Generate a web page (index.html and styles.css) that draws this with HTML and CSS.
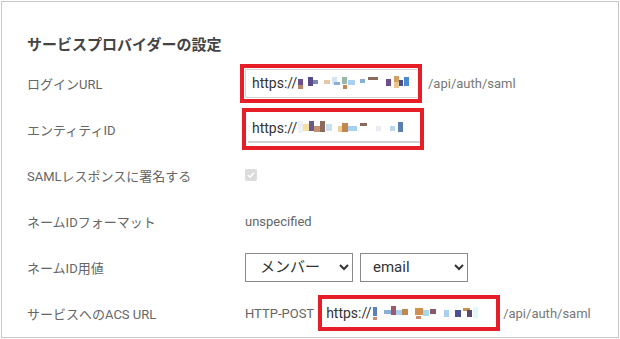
FILE: index.html
```html
<!doctype html>
<html lang="ja">
  <head>
    <meta charset="UTF-8" />
    <title>サービスプロバイダーの設定</title>
    <link rel="stylesheet" href="styles.css">
  </head>
  <body>
    <div class="panel">
      <h2>サービスプロバイダーの設定</h2>

      <div class="form-row">
        <div class="label">ログインURL</div>
        <div class="value">
          <span class="mark">
            <span class="url-field bordered">
              https://
              <svg class="blur" width="116" height="18" viewBox="0 0 116 18">
                <rect x="0" y="5" width="5" height="6" fill="#6b4f8c"/>
                <rect x="0" y="11" width="5" height="4" fill="#b8866a"/>
                <rect x="10" y="3" width="5" height="9" fill="#5a4a8a"/>
                <rect x="15" y="6" width="5" height="4" fill="#7a8ab0"/>
                <rect x="26" y="6" width="6" height="4" fill="#e8c8a8"/>
                <rect x="34" y="3" width="5" height="7" fill="#cfe6f0"/>
                <rect x="36" y="8" width="6" height="3" fill="#8ab0d8"/>
                <rect x="44" y="3" width="5" height="7" fill="#9ab8a8"/>
                <rect x="45" y="11" width="4" height="4" fill="#c08850"/>
                <rect x="50" y="6" width="7" height="5" fill="#a8d0f0"/>
                <rect x="62" y="5" width="5" height="4" fill="#8ab0d8"/>
                <rect x="70" y="3" width="10" height="3" fill="#8a6a5a"/>
                <rect x="88" y="5" width="5" height="7" fill="#6b4f8c"/>
                <rect x="96" y="2" width="5" height="6" fill="#d0a060"/>
                <rect x="96" y="8" width="5" height="6" fill="#e8c890"/>
                <rect x="101" y="6" width="4" height="6" fill="#4a5090"/>
                <rect x="106" y="3" width="5" height="9" fill="#4a8ad0"/>
              </svg>
            </span>
          </span>
          <span class="suffix">/api/auth/saml</span>
        </div>
      </div>

      <div class="form-row">
        <div class="label">エンティティID</div>
        <div class="value">
          <span class="mark mark-wide">
            <span class="url-field underlined">
              https://
              <svg class="blur" width="116" height="18" viewBox="0 0 116 18">
                <rect x="0" y="2" width="5" height="12" fill="#eef0f4"/>
                <rect x="5" y="5" width="6" height="7" fill="#f4e0a0"/>
                <rect x="11" y="2" width="5" height="10" fill="#6a5a8a"/>
                <rect x="16" y="7" width="6" height="6" fill="#c89070"/>
                <rect x="22" y="2" width="5" height="11" fill="#8a6a5a"/>
                <rect x="28" y="5" width="6" height="7" fill="#c8e0f0"/>
                <rect x="40" y="7" width="5" height="6" fill="#f0d090"/>
                <rect x="44" y="4" width="6" height="9" fill="#c08850"/>
                <rect x="50" y="7" width="9" height="5" fill="#a8d0f0"/>
                <rect x="62" y="4" width="7" height="3" fill="#8a6a5a"/>
                <rect x="78" y="7" width="5" height="5" fill="#e8eef4"/>
                <rect x="92" y="7" width="5" height="5" fill="#b8d8e8"/>
                <rect x="100" y="3" width="5" height="10" fill="#5a80b0"/>
              </svg>
            </span>
          </span>
        </div>
      </div>

      <div class="form-row">
        <div class="label">SAMLレスポンスに署名する</div>
        <div class="value">
          <span class="checkbox">
            <svg width="12" height="12" viewBox="0 0 12 12">
              <path d="M3 6.2l2 2 4-4.4" fill="none" stroke="#fff" stroke-width="1.6"/>
            </svg>
          </span>
        </div>
      </div>

      <div class="form-row">
        <div class="label">ネームIDフォーマット</div>
        <div class="value text">unspecified</div>
      </div>

      <div class="form-row">
        <div class="label">ネームID用値</div>
        <div class="value">
          <select class="select select-role">
            <option>メンバー</option>
          </select>
          <select class="select select-attr">
            <option>email</option>
          </select>
        </div>
      </div>

      <div class="form-row">
        <div class="label">サービスへのACS URL</div>
        <div class="value">
          <span class="text method">HTTP-POST</span>
          <span class="mark mark-acs">
            <span class="url-field plain">
              https://
              <svg class="blur" width="116" height="18" viewBox="0 0 116 18">
                <rect x="0" y="3" width="4" height="9" fill="#5a80c0"/>
                <rect x="0" y="13" width="4" height="3" fill="#c89070"/>
                <rect x="11" y="6" width="7" height="4" fill="#8ab0d8"/>
                <rect x="18" y="2" width="5" height="9" fill="#9a5a70"/>
                <rect x="23" y="6" width="6" height="5" fill="#a8d0f0"/>
                <rect x="29" y="5" width="6" height="6" fill="#c08850"/>
                <rect x="42" y="4" width="8" height="7" fill="#d09050"/>
                <rect x="43" y="12" width="5" height="3" fill="#c89070"/>
                <rect x="50" y="6" width="6" height="6" fill="#a8d8f0"/>
                <rect x="57" y="5" width="6" height="5" fill="#8a5a6a"/>
                <rect x="71" y="6" width="5" height="7" fill="#a8d0f0"/>
                <rect x="82" y="6" width="6" height="7" fill="#4a5090"/>
                <rect x="90" y="4" width="7" height="3" fill="#c89050"/>
                <rect x="94" y="6" width="5" height="7" fill="#5a4a70"/>
                <rect x="100" y="3" width="5" height="11" fill="#e0f8f8"/>
              </svg>
            </span>
          </span>
          <span class="suffix suffix-acs">/api/auth/saml</span>
        </div>
      </div>
    </div>
  </body>
</html>
```

FILE: styles.css
```css
body {
  margin: 0;
  padding: 0;
  font-family: Roboto, "Noto Sans CJK JP", sans-serif;
  background: #fff;
}

.panel {
  margin: 1px;
  width: 618px;
  height: 337px;
  box-sizing: border-box;
  border: 1px solid #c8c8c8;
  padding: 33px 0 0 25px;
}

.panel h2 {
  margin: 0 0 5px 0;
  font-size: 15px;
  line-height: 20px;
  font-weight: bold;
  color: #444;
}

.form-row {
  display: flex;
  align-items: center;
  height: 46px;
}

.label {
  width: 218px;
  flex-shrink: 0;
  font-size: 13px;
  color: #666;
}

.value {
  display: flex;
  align-items: center;
}

.text {
  font-size: 13px;
  color: #666;
}

.suffix {
  font-size: 13px;
  color: #777;
  margin-left: 6px;
}

.suffix-acs {
  margin-left: 3px;
}

/* red annotation frame around the blurred url fields */
.mark {
  display: inline-flex;
  border: 4px solid #e61e28;
  padding: 1px;
  margin-left: -5px;
}

.mark-wide {
  margin-left: -3px;
  padding: 2px 0 3px 2px;
}

.mark-acs {
  margin-left: 4px;
  padding: 2px 1px;
}

.url-field {
  display: flex;
  align-items: center;
  width: 172px;
  height: 29px;
  box-sizing: border-box;
  padding-left: 6px;
  font-size: 14px;
  color: #333;
  white-space: nowrap;
  overflow: hidden;
}

.url-field.bordered {
  border: 1px solid #d4d4d4;
  border-right: none;
  border-radius: 2px 0 0 2px;
}

.url-field.underlined {
  border-bottom: 2px solid #d0d0d0;
  padding-left: 4px;
}

.url-field.plain {
  width: 172px;
  height: 24px;
  padding-left: 3px;
}

.blur {
  flex-shrink: 0;
  margin-left: 1px;
}

.checkbox {
  display: inline-flex;
  width: 12px;
  height: 12px;
  background: #dcdcdc;
  border-radius: 2px;
}

.select {
  height: 29px;
  font-family: Roboto, "Noto Sans CJK JP", sans-serif;
  font-size: 15px;
  color: #333;
  background: #fff;
  border: 1px solid #8a8a8a;
  border-radius: 0;
  padding: 0 6px;
}

.select-role {
  width: 108px;
  padding-left: 10px;
}

.select-attr {
  width: 108px;
  margin-left: 7px;
  padding-left: 8px;
}

.method {
  color: #666;
}
```
